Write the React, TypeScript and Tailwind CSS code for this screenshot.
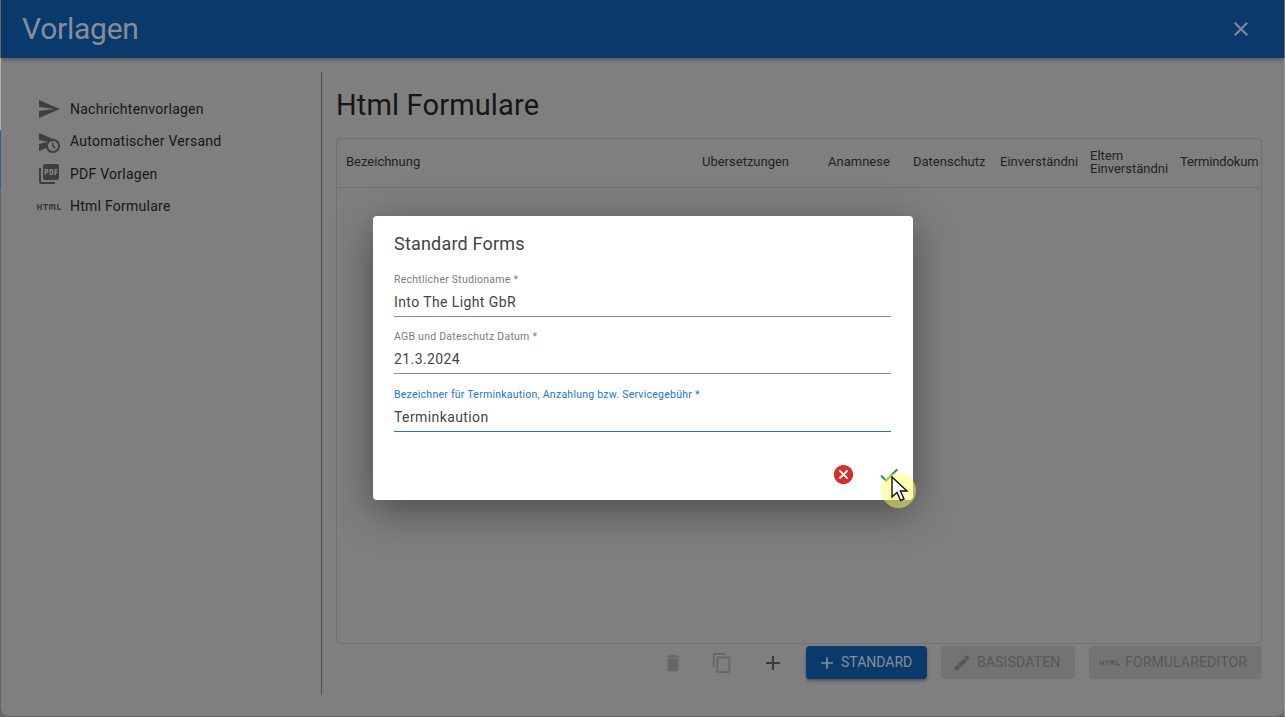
import type { ReactNode } from "react";

const paths = {
  send: "M2.01 21L23 12 2.01 3 2 10l15 2-15 2z",
  scheduleSend:
    "M16.5 12.5H15v4l3 2 .75-1.23-2.25-1.52V12.5zM16 9 2 3v7l9 2-9 2v7l7.27-3.11C10.09 20.83 12.79 23 16 23c3.86 0 7-3.14 7-7s-3.14-7-7-7zm0 12c-2.75 0-4.98-2.22-5-4.97v-.07C11.02 13.22 13.25 11 16 11c2.76 0 5 2.24 5 5s-2.24 5-5 5z",
  pdf: "M20 2H8c-1.1 0-2 .9-2 2v12c0 1.1.9 2 2 2h12c1.1 0 2-.9 2-2V4c0-1.1-.9-2-2-2zm-8.5 7.5c0 .83-.67 1.5-1.5 1.5H9v2H7.5V7H10c.83 0 1.5.67 1.5 1.5v1zm5 2c0 .83-.67 1.5-1.5 1.5h-2.5V7H15c.83 0 1.5.67 1.5 1.5v3zm4-3H19v1h1.5V11H19v2h-1.5V7h3v1.5zM9 9.5h1v-1H9v1zM4 6H2v14c0 1.1.9 2 2 2h14v-2H4V6zm10 5.5h1v-3h-1v3z",
  html: "M3.5 9H5v6H3.5v-2.5h-2V15H0V9h1.5v2h2V9zm14 0H13c-.55 0-1 .45-1 1v5h1.5v-4.5h1V14H16v-3.51h1V15h1.5v-5c0-.55-.45-1-1-1zM11 9H6v1.5h1.75V15h1.5v-4.5H11V9zm13 6v-1.5h-2.5V9H20v6h4z",
  close:
    "M19 6.41L17.59 5 12 10.59 6.41 5 5 6.41 10.59 12 5 17.59 6.41 19 12 13.41 17.59 19 19 17.59 13.41 12z",
  trash:
    "M6 19c0 1.1.9 2 2 2h8c1.1 0 2-.9 2-2V7H6v12zM19 4h-3.5l-1-1h-5l-1 1H5v2h14V4z",
  copy: "M16 1H4c-1.1 0-2 .9-2 2v14h2V3h12V1zm3 4H8c-1.1 0-2 .9-2 2v14c0 1.1.9 2 2 2h11c1.1 0 2-.9 2-2V7c0-1.1-.9-2-2-2zm0 16H8V7h11v14z",
  add: "M19 13h-6v6h-2v-6H5v-2h6V5h2v6h6v2z",
  edit: "M3 17.25V21h3.75L17.81 9.94l-3.75-3.75L3 17.25zM20.71 7.04c.39-.39.39-1.02 0-1.41l-2.34-2.34c-.39-.39-1.02-.39-1.41 0l-1.83 1.83 3.75 3.75 1.83-1.83z",
  cancel:
    "M12 2C6.47 2 2 6.47 2 12s4.47 10 10 10 10-4.47 10-10S17.53 2 12 2zm5 13.59L15.59 17 12 13.41 8.41 17 7 15.59 10.59 12 7 8.41 8.41 7 12 10.59 15.59 7 17 8.41 13.41 12 17 15.59z",
  check: "M9 16.17L4.83 12l-1.42 1.41L9 19 21 7l-1.41-1.41z",
};

function Icon({ d, className }: { d: string; className: string }) {
  return (
    <svg viewBox="0 0 24 24" fill="currentColor" className={className}>
      <path d={d} />
    </svg>
  );
}

const menu = [
  { label: "Nachrichtenvorlagen", icon: paths.send },
  { label: "Automatischer Versand", icon: paths.scheduleSend },
  { label: "PDF Vorlagen", icon: paths.pdf },
  { label: "Html Formulare", icon: paths.html },
];

function MenuItem({ label, icon }: { label: string; icon: string }) {
  return (
    <div className="flex h-[32.5px] items-center pl-[36px]">
      <Icon d={icon} className="h-6 w-6 text-[#3f3f3f]" />
      <span className="ml-[9px] text-[14px] tracking-[0.25px] text-[#161616]">{label}</span>
    </div>
  );
}

function HeaderCell({ className, children }: { className: string; children: ReactNode }) {
  return (
    <div className={`shrink-0 whitespace-nowrap text-[13px] leading-[13px] text-[#1f1f1f] ${className}`}>
      {children}
    </div>
  );
}

function DisabledButton({ icon, label, className }: { icon: ReactNode; label: string; className: string }) {
  return (
    <div className={`flex h-[33px] items-center rounded bg-[#737373] pl-[11px] text-[14px] tracking-[0.15px] text-[#585858] ${className}`}>
      {icon}
      <span>{label}</span>
    </div>
  );
}

function Field({ label, value, focused }: { label: string; value: string; focused?: boolean }) {
  return (
    <div className={`border-b ${focused ? "border-[#1976d2]" : "border-[#8c8c8c]"}`}>
      <div className={`text-[10.5px] leading-[12px] tracking-[0.25px] ${focused ? "text-[#1976d2]" : "text-[#7d7d7d]"}`}>
        {label} *
      </div>
      <div className="pt-[5px] pb-[3px] text-[14px] leading-[22px] tracking-[0.4px] text-[#444444]">{value}</div>
    </div>
  );
}

export default function App() {
  return (
    <div className="relative h-[717px] w-[1285px] overflow-hidden bg-[#666666] font-['Roboto',sans-serif]">
      {/* Sliver of the page behind the window */}
      <div className="absolute left-0 top-[58px] h-[72px] w-px bg-[#b0b0b0]" />
      <div className="absolute left-0 top-[130px] h-[58px] w-px bg-[#2f5f8f]" />
      <div className="absolute right-0 top-[58px] h-[658px] w-px bg-[#969696]" />

      <div className="ml-px flex h-[716px] w-[1283px] flex-col overflow-hidden rounded-b-lg bg-[#7f7f7f]">
        <header className="flex h-[58px] shrink-0 items-center justify-between bg-[#0a3a6c] pl-[21px] pr-[31px] shadow-[0_2px_4px_rgba(0,0,0,0.3)]">
          <h1 className="text-[30px] leading-none tracking-[-0.25px] text-[#858e99]">Vorlagen</h1>
          <Icon d={paths.close} className="h-6 w-6 text-[#7f8a97]" />
        </header>

        <div className="flex h-[637px] pt-[14px]">
          <nav className="h-full w-[321px] shrink-0 border-r border-[#4d4d4d] pt-[20.8px]">
            {menu.map((item) => (
              <MenuItem key={item.label} label={item.label} icon={item.icon} />
            ))}
          </nav>

          <main className="flex flex-1 flex-col pl-[14px]">
            <h2 className="h-[66px] pt-[15px] text-[29px] leading-[36px] tracking-[0.15px] text-[#161616]">Html Formulare</h2>
            <div className="h-[506px] w-[926px] rounded border border-[#717171]">
              <div className="flex h-[49px] items-center border-b border-[#717171] pb-[3px] pl-[9px]">
                <HeaderCell className="w-[356px]">Bezeichnung</HeaderCell>
                <HeaderCell className="w-[126px]">Ubersetzungen</HeaderCell>
                <HeaderCell className="w-[85px]">Anamnese</HeaderCell>
                <HeaderCell className="w-[87px]">Datenschutz</HeaderCell>
                <HeaderCell className="w-[90px]">Einverständni</HeaderCell>
                <HeaderCell className="w-[90px]">
                  Eltern
                  <br />
                  Einverständni
                </HeaderCell>
                <HeaderCell className="w-[80px] tracking-[-0.15px]">Termindokum</HeaderCell>
              </div>
            </div>

            <div className="mt-[2px] flex h-[33px] w-[926px] items-center justify-end">
              <Icon d={paths.trash} className="mr-[27px] h-[22px] w-[22px] text-[#666666]" />
              <Icon d={paths.copy} className="mr-[28px] h-[22px] w-[22px] text-[#666666]" />
              <Icon d={paths.add} className="mr-[21px] h-6 w-6 text-[#3d3d3d]" />
              <div className="mr-[14px] flex h-[33px] w-[121px] items-center rounded bg-[#0a3a6c] pl-[11px] text-[14px] text-[#858e99] shadow-[0_2px_3px_rgba(0,0,0,0.35)]">
                <Icon d={paths.add} className="mr-[4px] h-5 w-5" />
                <span>STANDARD</span>
              </div>
              <DisabledButton
                className="mr-[14px] w-[134px]"
                label="BASISDATEN"
                icon={<Icon d={paths.edit} className="mr-[5px] h-5 w-5" />}
              />
              <DisabledButton
                className="w-[173px]"
                label="FORMULAREDITOR"
                icon={<Icon d={paths.html} className="mr-[5px] h-5 w-5" />}
              />
            </div>
          </main>
        </div>
      </div>

      {/* Standard Forms dialog */}
      <div className="absolute left-[373px] top-[216px] h-[284px] w-[540px] rounded bg-white px-[21px] pt-[16px] shadow-[0_11px_40px_rgba(0,0,0,0.42)]">
        <div className="text-[18px] leading-[24px] tracking-[0.2px] text-[#444444]">Standard Forms</div>
        <div className="mt-[17.9px] flex flex-col gap-[14.5px] pr-px">
          <Field label="Rechtlicher Studioname" value="Into The Light GbR" />
          <Field label="AGB und Dateschutz Datum" value="21.3.2024" />
          <Field label="Bezeichner für Terminkaution, Anzahlung bzw. Servicegebühr" value="Terminkaution" focused />
        </div>
        <Icon d={paths.cancel} className="absolute left-[459px] top-[247px] h-[23px] w-[23px] text-[#d32f2f]" />
        <Icon d={paths.check} className="absolute left-[504px] top-[247px] h-[24px] w-[24px] text-[#388e3c]" />
      </div>

      {/* Pointer highlight */}
      <div className="absolute left-[881px] top-[473px] h-[35px] w-[35px] rounded-full bg-[#ffff66]/50" />
      <svg viewBox="0 0 20 28" className="absolute left-[890px] top-[476px] h-[28px] w-[20px]">
        <path d="M2 1v20l5-4.5 3.6 8 3.4-1.5-3.6-8H17z" fill="#fff" stroke="#111" strokeWidth="1.4" strokeLinejoin="miter" />
      </svg>
    </div>
  );
}
